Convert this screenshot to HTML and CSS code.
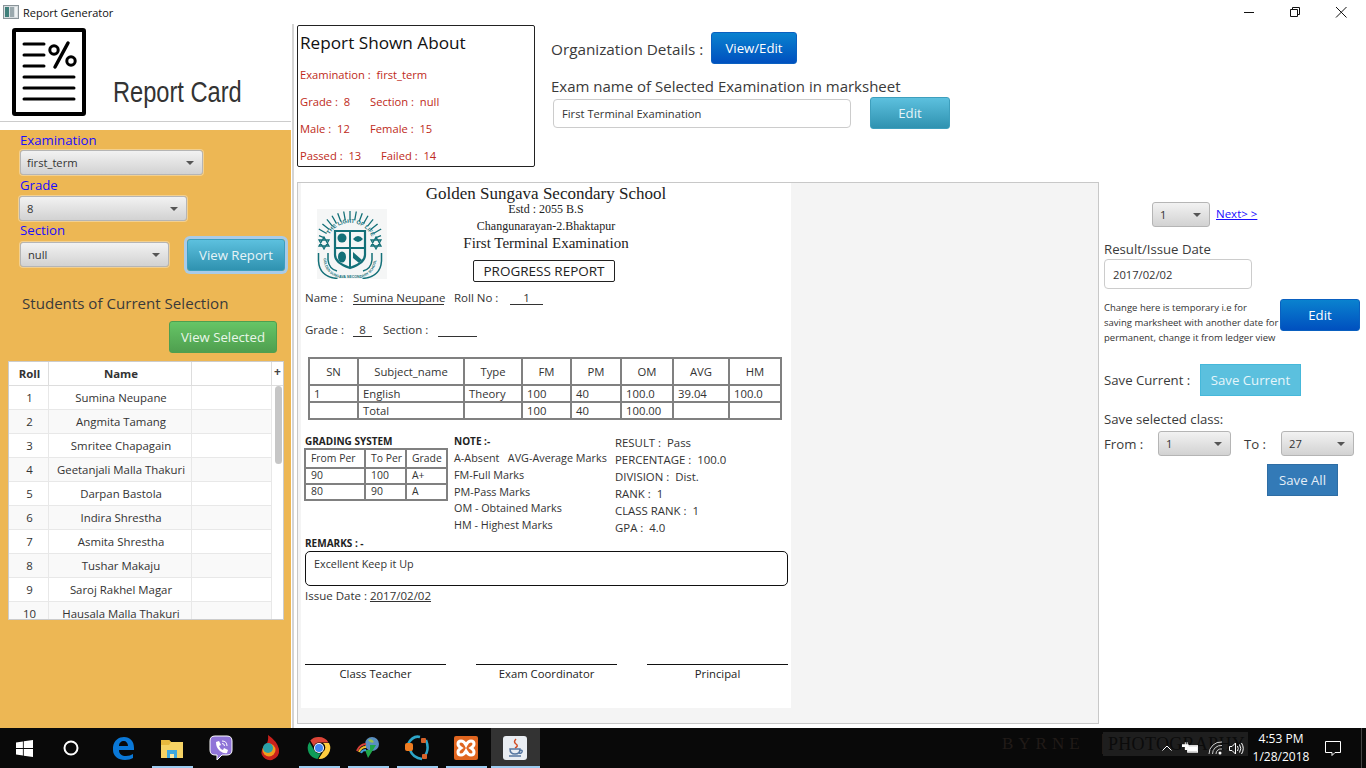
FILE: index.html
```html
<!DOCTYPE html>
<html lang="en">
<head>
<meta charset="utf-8">
<title>Report Generator</title>
<link rel="stylesheet" href="styles.css">
</head>
<body>
<header class="titlebar">
  <svg class="app-icon" width="16" height="14" viewBox="0 0 16 14"><rect x="0.5" y="0.5" width="15" height="13" fill="#d8dde0" stroke="#8a9499"/><rect x="2" y="2" width="4" height="10" fill="#3f7f7a"/><rect x="7" y="2" width="4" height="10" fill="#9aa8ad"/><rect x="12" y="2" width="2" height="10" fill="#eef2f3"/></svg>
  <span class="title-text">Report Generator</span>
  <div class="win-controls">
    <span class="win-btn"><svg width="12" height="12" viewBox="0 0 12 12"><path d="M1 6.500h10" stroke="#111" fill="none"/></svg></span>
    <span class="win-btn"><svg width="12" height="12" viewBox="0 0 12 12"><path d="M1.500 3.500h7v7h-7zM3.500 3.500v-2h7v7h-2" stroke="#111" fill="none"/></svg></span>
    <span class="win-btn"><svg width="12" height="12" viewBox="0 0 12 12"><path d="M1 1l10.500 10.500M11.500 1L1 11.500" stroke="#111" fill="none"/></svg></span>
  </div>
</header>

<div class="app">
  <aside class="sidebar">
    <div class="brand">
      <svg class="brand-logo" width="74" height="88" viewBox="0 0 74 88">
        <rect x="2" y="2" width="70" height="84" rx="1" fill="#fff" stroke="#000" stroke-width="4"/>
        <g stroke="#000" stroke-width="3" stroke-linecap="round" fill="none">
          <path d="M12 16h20M12 27h20M12 38h20M12 49h50M12 60h50M12 71h50"/>
          <circle cx="42" cy="22" r="4.200"/><circle cx="59" cy="33" r="4.200"/>
          <path d="M56 15L43 39" stroke-width="3.500"/>
        </g>
      </svg>
      <span class="brand-name">Report Card</span>
    </div>
    <div class="filters">
      <label class="blue-label">Examination</label>
      <div class="select sel-exam"><span>first_term</span><i class="caret"></i></div>
      <label class="blue-label grade-label">Grade</label>
      <div class="select sel-grade"><span>8</span><i class="caret"></i></div>
      <div class="section-row">
        <div>
          <label class="blue-label">Section</label>
          <div class="select sel-section"><span>null</span><i class="caret"></i></div>
        </div>
        <button class="btn btn-teal btn-focus">View Report</button>
      </div>
      <h2 class="students-title">Students of Current Selection</h2>
      <div class="view-row"><button class="btn btn-green">View Selected</button></div>
      <div class="students">
        <div class="st-head"><span>Roll</span><span>Name</span><span></span><span class="plus">+</span></div>
        <div class="st-row"><span>1</span><span>Sumina Neupane</span><span></span></div>
        <div class="st-row"><span>2</span><span>Angmita Tamang</span><span></span></div>
        <div class="st-row"><span>3</span><span>Smritee Chapagain</span><span></span></div>
        <div class="st-row"><span>4</span><span>Geetanjali Malla Thakuri</span><span></span></div>
        <div class="st-row"><span>5</span><span>Darpan Bastola</span><span></span></div>
        <div class="st-row"><span>6</span><span>Indira Shrestha</span><span></span></div>
        <div class="st-row"><span>7</span><span>Asmita Shrestha</span><span></span></div>
        <div class="st-row"><span>8</span><span>Tushar Makaju</span><span></span></div>
        <div class="st-row"><span>9</span><span>Saroj Rakhel Magar</span><span></span></div>
        <div class="st-row"><span>10</span><span>Hausala Malla Thakuri</span><span></span></div>
        <i class="thumb"></i>
      </div>
    </div>
  </aside>
  <div class="divider"></div>

  <main class="main">
    <section class="top">
      <div class="about">
        <h2 class="about-title">Report Shown About</h2>
        <div class="about-row">Examination :&nbsp; first_term</div>
        <div class="about-row"><span class="c70">Grade :&nbsp; 8</span><span>Section :&nbsp; null</span></div>
        <div class="about-row"><span class="c70">Male :&nbsp; 12</span><span>Female :&nbsp; 15</span></div>
        <div class="about-row"><span class="c81">Passed :&nbsp; 13</span><span>Failed :&nbsp; 14</span></div>
      </div>
      <div class="org">
        <div class="org-row"><span class="org-label">Organization Details :</span><button class="btn btn-blue btn-org">View/Edit</button></div>
        <div class="exam-label">Exam name of Selected Examination in marksheet</div>
        <div class="exam-row"><div class="input exam-input">First Terminal Examination</div><button class="btn btn-teal btn-edit">Edit</button></div>
      </div>
    </section>

    <section class="bottom">
      <div class="viewer">
        <article class="sheet">
          <div class="sheet-head">
            <svg class="crest" width="70" height="70" viewBox="0 0 70 70">
              <rect width="70" height="70" fill="#f5f6f6"/>
              <defs>
                <path id="arc" d="M10 31A24 24 0 0 1 56 31"/>
                <path id="band" d="M6.500 47Q6.500 65 22 68.500H44Q59.500 65 59.500 47"/>
              </defs>
              <g stroke="#137078" fill="none">
                <path stroke-width="1.300" d="M7.600 28.800L2 26.700M9.600 24.500L1.800 20M12.300 20.600L5.400 14.900M15.600 17.300L9.900 10.400M19.500 14.600L15 6.800M23.800 12.600L20.700 4.200M28.300 11.400L26.700 2.500M33 11V2M37.700 11.400L39.300 2.500M42.200 12.600L45.300 4.200M46.500 14.600L51 6.800M50.400 17.300L56.100 10.400M53.700 20.600L60.600 14.900M56.400 24.500L64.200 20M58.400 28.800L64 26.700"/>
                <path stroke-width="1.300" d="M7 28l5 9H2zM7 40l5-9H2zM59 28l5 9H54zM59 40l5-9H54z"/>
                <path stroke-width="2.200" d="M18 22h30v24q0 8-15 13q-15-5-15-13z"/>
                <path stroke-width="2" d="M33 22v36M18 39h30"/>
                <path stroke-width="1.500" d="M1.500 44v8q1 16 19 17.500M64.500 44v8q-1 16-19 17.500M11 44v7q1 9 9 11M55 44v7q-1 9-9 11"/>
              </g>
              <g fill="#137078">
                <circle cx="25" cy="29" r="4.500"/><path d="M36 30q5-6 10 0q-5 6-10 0z"/><ellipse cx="25" cy="48" rx="4" ry="5.500"/><path d="M36 43l9 8-3 3-6-5z"/>
              </g>
              <text class="crest-text" font-size="5.500" fill="#137078"><textPath href="#arc" startOffset="6">THE LIGHT OF LIFE</textPath></text>
              <text class="crest-text" font-size="3.600" fill="#137078"><textPath href="#band" startOffset="2">GOLDEN SUNGAVA SECONDARY SCHOOL</textPath></text>
            </svg>
            <div class="head-text">
              <div class="school">Golden Sungava Secondary School</div>
              <div class="estd">Estd : 2055 B.S</div>
              <div class="place">Changunarayan-2.Bhaktapur</div>
              <div class="term">First Terminal Examination</div>
              <div class="progress">PROGRESS REPORT</div>
            </div>
          </div>
          <div class="info-row name-row">
            <span class="l48">Name :</span><span class="fill f-name">Sumina Neupane</span>
            <span class="roll-l">Roll No :</span><span class="fill f-roll">1</span>
          </div>
          <div class="info-row grade-row">
            <span class="l48">Grade :</span><span class="fill f-grade">8</span>
            <span class="sec-l">Section :</span><span class="fill f-sec"></span>
          </div>
          <table class="marks">
            <colgroup><col class="m1"><col class="m2"><col class="m3"><col class="m4"><col class="m5"><col class="m6"><col class="m7"><col class="m8"></colgroup>
            <tr class="m-head"><th>SN</th><th>Subject_name</th><th>Type</th><th>FM</th><th>PM</th><th>OM</th><th>AVG</th><th>HM</th></tr>
            <tr><td>1</td><td>English</td><td>Theory</td><td>100</td><td>40</td><td>100.0</td><td>39.04</td><td>100.0</td></tr>
            <tr><td></td><td>Total</td><td></td><td>100</td><td>40</td><td>100.00</td><td></td><td></td></tr>
          </table>
          <div class="lower">
            <div class="grading">
              <div class="bold-h grade-h">GRADING SYSTEM</div>
              <table class="gradetable">
                <colgroup><col class="g1"><col class="g2"><col class="g3"></colgroup>
                <tr class="g-head"><td>From Per</td><td>To Per</td><td>Grade</td></tr>
                <tr><td>90</td><td>100</td><td>A+</td></tr>
                <tr><td>80</td><td>90</td><td>A</td></tr>
              </table>
            </div>
            <div class="note">
              <div class="bold-h note-h">NOTE :-</div>
              <div>A-Absent &nbsp; AVG-Average Marks</div>
              <div>FM-Full Marks</div>
              <div>PM-Pass Marks</div>
              <div>OM - Obtained Marks</div>
              <div>HM - Highest Marks</div>
            </div>
            <div class="result">
              <div>RESULT :&nbsp; Pass</div>
              <div>PERCENTAGE :&nbsp; 100.0</div>
              <div>DIVISION :&nbsp; Dist.</div>
              <div>RANK :&nbsp; 1</div>
              <div>CLASS RANK :&nbsp; 1</div>
              <div>GPA :&nbsp; 4.0</div>
            </div>
          </div>
          <div class="bold-h remarks-h">REMARKS : -</div>
          <div class="remarks">Excellent Keep it Up</div>
          <div class="issue">Issue Date : <u>2017/02/02</u></div>
          <div class="signs"><div>Class Teacher</div><div>Exam Coordinator</div><div>Principal</div></div>
        </article>
      </div>

      <aside class="tools">
        <div class="pager">
          <div class="select sel-page"><span>1</span><i class="caret"></i></div>
          <a class="next" href="#">Next&gt; &gt;</a>
        </div>
        <div class="t-label date-label">Result/Issue Date</div>
        <div class="input date-input">2017/02/02</div>
        <div class="note-row">
          <p class="small-note">Change here is temporary i.e for<br>saving marksheet with another date for<br>permanent, change it from ledger view</p>
          <button class="btn btn-blue btn-date">Edit</button>
        </div>
        <div class="save-row"><span class="t-label save-l">Save Current :</span><button class="btn btn-flat-info">Save Current</button></div>
        <div class="t-label class-l">Save selected class:</div>
        <div class="range-row">
          <span class="t-label from-l">From :</span>
          <div class="select sel-range"><span>1</span><i class="caret"></i></div>
          <span class="t-label to-l">To :</span>
          <div class="select sel-range"><span>27</span><i class="caret"></i></div>
        </div>
        <div class="saveall-row"><button class="btn btn-flat-primary">Save All</button></div>
      </aside>
    </section>
  </main>
</div>

<footer class="taskbar">
  <span class="tb-item tb-start"><svg width="17" height="17" viewBox="0 0 18 18"><path fill="#fff" d="M0 2.600l7.300-1v7H0zM8.200 1.400L18 0v8.600H8.200zM0 9.400h7.300v7L0 15.400zM8.200 9.400H18V18l-9.800-1.400z"/></svg></span>
  <span class="tb-item tb-search"><svg width="16" height="16" viewBox="0 0 16 16"><circle cx="8" cy="8" r="6.500" fill="none" stroke="#fff" stroke-width="2"/></svg></span>
  <span class="tb-item"><svg width="22" height="24" viewBox="0 0 22 24"><path fill="#0a78d7" d="M1 11C2 4 7 1 12 1c6 0 10 4 10 11v2H7c0 4 3 6 7 6 3 0 5-1 7-2v4c-2 1-5 2-8 2C6 24 1 20 1 14c0-1 0-2 0-3zm6-1h9c0-3-2-5-4-5-3 0-5 2-5 5z"/></svg></span>
  <span class="tb-item on"><svg width="22" height="20" viewBox="0 0 22 20"><path fill="#f6d365" d="M0 2h8l2 2h12v16H0z"/><path fill="#e8b93e" d="M0 2h8l2 2-2 3H0z"/><path fill="#3fa9e0" d="M6 12h10v8H6z"/><path fill="#fbe9a6" d="M9 16h4v4H9z"/></svg></span>
  <span class="tb-item"><svg width="24" height="26" viewBox="0 0 24 26"><path fill="#8f74d8" stroke="#fff" d="M6 1h12q5 0 5 5v9q0 5-5 5h-5l-5 5v-5H6q-5 0-5-5V6q0-5 5-5z"/><path fill="#fff" d="M7 7l3-1 2 4-2 1q1 3 4 4l1-2 4 2-1 3q-3 1-7-2T7 7z"/><path fill="none" stroke="#fff" d="M13 6q5 0 5 5M13 8.500q2.500 0 2.500 2.500"/></svg></span>
  <span class="tb-item"><svg width="20" height="26" viewBox="0 0 20 26"><path fill="#c8201c" d="M8 0q9 6 11 14 1 8-7 11Q5 26 2 20 0 15 5 11 9 7 8 0z"/><circle cx="9" cy="15" r="6.500" fill="#f09d1e"/><circle cx="8" cy="13" r="5" fill="#2ba0a8"/></svg></span>
  <span class="tb-item on"><svg width="24" height="24" viewBox="0 0 24 24"><path fill="#db4437" d="M12 1a11 11 0 0 1 9.500 5.500H12a5.500 5.500 0 0 0-5.200 3.800L3.300 4.400A11 11 0 0 1 12 1z"/><path fill="#0f9d58" d="M2.500 6a11 11 0 0 0 8 17l3.500-6a5.500 5.500 0 0 1-7-3z"/><path fill="#ffcd40" d="M22 7a11 11 0 0 1-10.500 16l4.500-7a5.500 5.500 0 0 0 0-9z"/><circle cx="12" cy="12" r="5" fill="#fff"/><circle cx="12" cy="12" r="4" fill="#4285f4"/></svg></span>
  <span class="tb-item on"><svg width="24" height="22" viewBox="0 0 24 22"><circle cx="16" cy="7" r="7" fill="#5a8fc0"/><path fill="#9ac24a" d="M12 3q4-2 6 2-3 2-6-2z"/><path fill="#1fa64a" d="M14 8h6l-8 13-3-8h5z"/><path fill="none" stroke="#d7403a" stroke-width="2" d="M1 14q3-7 9-7"/><path fill="none" stroke="#f0c030" stroke-width="2" d="M3 15q2-5 7-5"/><path fill="none" stroke="#3fa0d8" stroke-width="2" d="M5 16q1-3 5-3"/></svg></span>
  <span class="tb-item on"><svg width="26" height="26" viewBox="0 0 26 26"><path fill="none" stroke="#2da5c8" stroke-width="2.500" d="M4 9Q9 0 16 2M22 5q4 10-2 17M6 15q3 8 12 9"/><rect x="1" y="8" width="8" height="8" rx="2" fill="#ef7d22"/><rect x="17" y="3" width="5" height="5" rx="1" fill="#d5622a"/><rect x="18" y="19" width="5" height="5" rx="1" fill="#d5622a"/></svg></span>
  <span class="tb-item on"><svg width="24" height="24" viewBox="0 0 24 24"><rect width="24" height="24" rx="2" fill="#e0651f"/><path fill="none" stroke="#fff" stroke-width="3" d="M7 5q-3 0-3 3 0 2 3 4-3 2-3 4 0 3 3 3 3 0 5-4 2 4 5 4 3 0 3-3 0-2-3-4 3-2 3-4 0-3-3-3-3 0-5 4-2-4-5-4z"/></svg></span>
  <span class="tb-item on active"><svg width="24" height="24" viewBox="0 0 24 24"><rect width="24" height="24" rx="3" fill="#e9edf2"/><path fill="none" stroke="#d24c24" stroke-width="1.500" d="M13 3q-3 3 0 5t-1 4"/><path fill="none" stroke="#5576a0" stroke-width="1.500" d="M7 13q0 5 5 5t5-5H7zM17 14q3 0 2 2t-3 1M6 20h12"/></svg></span>
  <div class="tray">
    <div class="watermark"><span class="byrne">BYRNE</span><span class="photo">PHOTOGRAPHY</span></div>
    <svg class="tray-i chev" width="10" height="6" viewBox="0 0 10 6"><path d="M.5 5.500L5 1l4.500 4.500" fill="none" stroke="#fff"/></svg>
    <svg class="tray-i batt" width="16" height="12" viewBox="0 0 17 12"><path fill="#fff" d="M0 2h3V0h1v2h1V0h1v2h1v3H6v3H3V5H0z"/><rect x="6" y="3.500" width="10.500" height="7" fill="none" stroke="#fff"/><rect x="6" y="4" width="10" height="6" fill="#fff"/></svg>
    <svg class="tray-i wifi" width="15" height="14" viewBox="0 0 15 14"><path d="M1 13A12 12 0 0 1 14 1M4.500 13A8.500 8.500 0 0 1 14 4.500M8 13A5 5 0 0 1 14 8" fill="none" stroke="#cfcfcf"/><circle cx="12" cy="12" r="1.500" fill="#fff"/></svg>
    <svg class="tray-i vol" width="15" height="13" viewBox="0 0 15 13"><path d="M.5 4.500h2.500L6.500 1v11L3 8.500H.5zM8.500 4q1.500 2.500 0 5M10.500 2.500q2.500 4 0 8M12.500 1q3.500 5.500 0 11" fill="none" stroke="#fff"/></svg>
    <div class="clock"><div>4:53 PM</div><div>1/28/2018</div></div>
    <svg class="tray-i notif" width="16" height="15" viewBox="0 0 16 15"><path d="M.5.500h15v11H10l-3 3v-3H.5z" fill="none" stroke="#fff"/></svg>
    <i class="show-desk"></i>
  </div>
</footer>
</body>
</html>
```

FILE: styles.css
```css
* { box-sizing: border-box; }
html, body { margin: 0; height: 100%; }
body {
  width: 1366px; height: 768px; overflow: hidden; background: #fff;
  display: flex; flex-direction: column;
  font-family: "Open Sans", "Noto Sans", sans-serif; color: #333;
}
button { font-family: inherit; cursor: default; }
p, h2 { margin: 0; font-weight: 400; }

/* Window title */
.titlebar { height: 24px; display: flex; align-items: center; padding-left: 3px; flex: none; }
.app-icon { flex: none; }
.title-text { margin-left: 4px; font-size: 11px; color: #111; }
.win-controls { margin-left: auto; margin-right: 2px; display: flex; }
.win-btn { width: 46px; height: 24px; display: flex; align-items: center; justify-content: center; }

.app { height: 704px; display: flex; flex: none; }

/* Sidebar */
.sidebar { width: 291px; flex: none; display: flex; flex-direction: column; }
.brand { height: 98px; border-bottom: 1px solid #ccc; padding: 4px 0 0 12px; display: flex; align-items: flex-start; margin-bottom: 8px; }
.brand-logo { flex: none; }
.brand-name { margin: 44px 0 0 27px; font: 29px/40px "Liberation Sans", Arial, sans-serif; color: #333; transform: scaleX(.815); transform-origin: left; white-space: nowrap; }
.filters { flex: 1; background: #edb754; padding: 2px 0 0 20px; }
.blue-label { display: block; font-size: 13.200px; line-height: 16px; color: #1a0dff; }
.grade-label { margin-top: 2px; }
.select { display: flex; align-items: center; justify-content: space-between; padding: 0 8px 0 7px; height: 25px; border: 1px solid #b5b5b5; border-radius: 3px; background: linear-gradient(#f2f2f2, #d2d2d2); box-shadow: 0 0 0 1px rgba(255,255,255,.35); font-size: 11.200px; color: #333; }
.caret { width: 0; height: 0; border-left: 4px solid transparent; border-right: 4px solid transparent; border-top: 4px solid #555; margin-top: 1px; }
.sel-exam { width: 183px; margin: 2px 0 0 0; padding-left: 6px; }
.sel-grade { width: 168px; margin: 3px 0 0 -1px; }
.section-row { display: flex; margin-top: 1px; }
.sel-section { width: 149px; margin-top: 4px; }
.btn { border: 1px solid transparent; border-radius: 3px; color: #fff; font-size: 13.200px; padding: 0; }
.btn-teal { background: linear-gradient(#5cc0de, #2f92b0); border-color: #3e9fbd; color: #e6f4f8; }
.btn-focus { width: 98px; height: 32px; margin: 17px 0 0 18px; box-shadow: 0 0 0 3px #a9cbe8; }
.btn-green { width: 108px; height: 32px; background: linear-gradient(#66c566, #4f9f4f); border-color: #4f9f4f; color: #e9f7e9; }
.btn-blue { background: linear-gradient(#0a82cf, #0050bf); border-color: #0a60c0; }
.students-title { font-size: 15.100px; line-height: 18px; margin: 23px 0 0 2px; color: #3a3a3a; }
.view-row { margin: 9px 0 0 149px; }
.students { position: relative; width: 276px; height: 259px; margin: 8px 0 0 -12px; background: #fff; border: 1px solid #ccc; overflow: hidden; font-size: 11.400px; }
.st-head { display: grid; grid-template-columns: 40px 143px 80px 11px; height: 24px; border-bottom: 1px solid #ddd; font-weight: 700; text-align: center; line-height: 23px; }
.st-head span { border-right: 1px solid #ddd; padding-left: 2px; }
.st-head .plus { border: 0; font-size: 12px; color: #444; line-height: 20px; padding: 0; }
.st-row { display: grid; grid-template-columns: 40px 143px 80px; width: 263px; height: 24px; line-height: 23px; text-align: center; border-bottom: 1px solid #e8e8e8; background: #fff; }
.st-row:nth-child(odd) { background: #f9f9f9; }
.st-row span { border-right: 1px solid #e8e8e8; padding-left: 2px; }
.thumb { position: absolute; top: 24px; right: 1px; width: 7px; height: 78px; border-radius: 4px; background: #c6c6c6; }
.divider { width: 2px; margin-left: 1px; background: #d4d4d4; flex: none; }

/* Main */
.main { flex: 1; padding-left: 3px; display: flex; flex-direction: column; min-width: 0; }
.top { height: 158px; display: flex; flex: none; }
.about { width: 238px; height: 142px; margin-top: 1px; border: 1px solid #222; border-radius: 2px; padding: 5px 2px; color: #be2a20; font-size: 11.200px; }
.about-title { font-size: 17.200px; line-height: 24px; color: #111; margin-bottom: 12px; }
.about-row { height: 27px; line-height: 16px; display: flex; white-space: nowrap; }
.c70 { width: 70px; }
.c81 { width: 81px; }
.org { margin-left: 16px; }
.org-row { display: flex; align-items: center; margin-top: 8px; }
.org-label { width: 160px; font-size: 15.300px; padding-top: 2px; color: #3a3a3a; }
.btn-org { width: 86px; height: 32px; }
.exam-label { font-size: 15px; line-height: 20px; margin: 12px 0 1px; color: #3a3a3a; }
.exam-row { display: flex; align-items: center; margin: 0 0 0 2px; }
.input { border: 1px solid #ccc; border-radius: 4px; background: #fff; font-size: 11.200px; color: #333; display: flex; align-items: center; }
.exam-input { width: 298px; height: 29px; padding-left: 8px; }
.btn-edit { width: 80px; height: 32px; margin-left: 19px; }

.bottom { height: 542px; display: flex; flex: none; }
.viewer { width: 802px; height: 542px; flex: none; background: #f4f4f4; border: 1px solid #c8c8c8; padding-left: 3px; }
.sheet { width: 490px; height: 525px; background: #fff; padding: 0 0 0 4px; font-size: 11.400px; color: #333; }
.sheet-head { display: flex; align-items: flex-start; height: 99px; }
.crest { flex: none; margin: 26px 0 0 12px; }
.crest-text { font-family: "Liberation Sans", sans-serif; font-weight: 700; }
.head-text { width: 318px; text-align: center; font-family: "Liberation Serif", "Times New Roman", serif; color: #222; display: flex; flex-direction: column; align-items: center; padding-top: 2px; }
.school { font-size: 17px; line-height: 17px; }
.estd { font-size: 12px; line-height: 14px; }
.place { font-size: 12px; line-height: 14px; margin-top: 3px; }
.term { font-size: 15px; line-height: 18px; margin-top: 1px; }
.progress { width: 142px; height: 22px; margin: 8px 4px 0 0; border: 1px solid #222; border-radius: 2px; font: 13.500px/20px "Open Sans", sans-serif; }
.info-row { display: flex; height: 16px; line-height: 16px; font-size: 11.500px; white-space: nowrap; }
.name-row { margin-top: 8px; }
.grade-row { margin-top: 16px; }
.l48 { width: 48px; }
.fill { display: block; text-align: center; border-bottom: 1px solid #333; height: 15px; line-height: 15px; }
.f-name { width: 91px; }
.roll-l { margin-left: 10px; width: 46px; }
.f-roll { width: 33px; margin-left: 10px; }
.f-grade { width: 19px; }
.sec-l { margin-left: 11px; width: 44px; }
.f-sec { width: 39px; margin-left: 11px; }
.marks { border-collapse: collapse; table-layout: fixed; width: 472px; margin: 19px 0 0 3px; font-size: 11.300px; }
.marks th, .marks td { border: 2px solid #808080; padding: 0 0 0 4px; font-weight: 400; text-align: left; height: 17px; line-height: 14px; white-space: nowrap; }
.marks .m-head th { height: 27px; text-align: center; padding: 0; }
.m1 { width: 49px; } .m2 { width: 106px; } .m3 { width: 58px; } .m4 { width: 49px; } .m5 { width: 50px; } .m6 { width: 52px; } .m7 { width: 56px; } .m8 { width: 52px; }
.lower { display: flex; height: 102px; margin-top: 13px; }
.grading { width: 149px; flex: none; }
.bold-h { font-size: 10px; font-weight: 700; line-height: 15px; color: #222; }
.grade-h { padding-top: 1px; height: 15px; line-height: 14px; }
.gradetable { border-collapse: collapse; table-layout: fixed; width: 142px; margin-left: -1px; font-size: 10.400px; }
.gradetable td { border: 2px solid #808080; padding: 0 0 2px 5px; height: 16px; line-height: 12px; }
.gradetable .g-head td { height: 19px; }
.g1 { width: 60px; } .g2 { width: 41px; } .g3 { width: 41px; }
.note { width: 161px; flex: none; line-height: 16.800px; white-space: nowrap; font-size: 10.800px; }
.note-h { line-height: 17px; }
.result { padding-top: 1px; line-height: 17px; white-space: nowrap; font-size: 11.400px; }
.remarks-h { line-height: 16px; }
.remarks { width: 483px; height: 35px; border: 1px solid #111; border-radius: 5px; padding: 4px 8px; font-size: 10.800px; line-height: 15px; }
.issue { margin-top: 2px; line-height: 16px; font-size: 11.500px; }
.signs { display: grid; grid-template-columns: repeat(3, 141px); gap: 30px; margin-top: 60px; text-align: center; font-size: 11.300px; color: #222; }
.signs div { border-top: 1px solid #111; line-height: 18px; }

/* Right tools */
.tools { flex: 1; padding: 20px 0 0 5px; }
.pager { display: flex; align-items: center; margin-left: 48px; }
.sel-page { width: 58px; }
.next { margin-left: 6px; font-size: 11.500px; color: #1a0dff; margin-top: -2px; }
.t-label { font-size: 13.200px; line-height: 16px; color: #3a3a3a; }
.date-label { margin-top: 14px; }
.date-input { width: 148px; height: 30px; margin-top: 2px; padding-left: 8px; }
.note-row { display: flex; margin-top: 10px; height: 46px; }
.small-note { width: 176px; font-size: 9.500px; line-height: 15px; flex: none; padding-top: 1px; white-space: nowrap; }
.btn-date { width: 80px; height: 32px; }
.save-row { display: flex; align-items: center; margin-top: 19px; }
.save-l { width: 96px; }
.btn-flat-info { width: 101px; height: 32px; background: #5bc0de; border-color: #46b8da; border-radius: 0; color: #e6f6fb; }
.class-l { margin-top: 15px; }
.range-row { display: flex; align-items: center; margin-top: 4px; }
.from-l { width: 54px; }
.to-l { width: 37px; margin-left: 13px; }
.sel-range { width: 73px; }
.saveall-row { margin: 8px 0 0 163px; }
.btn-flat-primary { width: 71px; height: 32px; background: #337ab7; border-color: #2e6da4; border-radius: 0; color: #e4eef7; }

/* Taskbar */
.taskbar { height: 40px; flex: none; background: #090909; display: flex; align-items: stretch; }
.tb-item { width: 49px; display: flex; align-items: center; justify-content: center; flex: none; position: relative; }
.tb-start { width: 48px; }
.tb-search { width: 50.500px; padding-right: 4px; }
.tb-item.on::after { content: ""; position: absolute; left: 4px; right: 4px; bottom: 0; height: 2px; background: #9ccbf0; }
.tb-item.active { background: #333; }
.tb-item.active::after { left: 0; right: 0; }
.tray { margin-left: auto; width: 366px; display: flex; align-items: center; position: relative; color: #fff; }
.watermark { position: absolute; left: 2px; top: 4px; height: 24px; display: flex; align-items: center; font-family: "Liberation Serif", serif; font-size: 17px; }
.byrne { color: #211b18; letter-spacing: 5px; width: 101px; border-right: 1px solid #211b18; margin-right: 0; }
.photo { background: #1e1e1e; color: #0b0b0b; width: 145px; height: 24px; line-height: 24px; padding-left: 5px; white-space: nowrap; overflow: hidden; font-size: 18px; letter-spacing: .3px; }
.tray-i { flex: none; position: relative; }
.chev { margin-left: 162px; }
.batt { margin-left: 10px; }
.wifi { margin-left: 10px; }
.vol { margin-left: 6px; }
.clock { width: 66px; margin-left: 4px; text-align: center; font-size: 12px; line-height: 18px; position: relative; }
.notif { margin-left: 11px; }
.show-desk { width: 1px; height: 40px; background: #444; margin-left: 20px; }
```
